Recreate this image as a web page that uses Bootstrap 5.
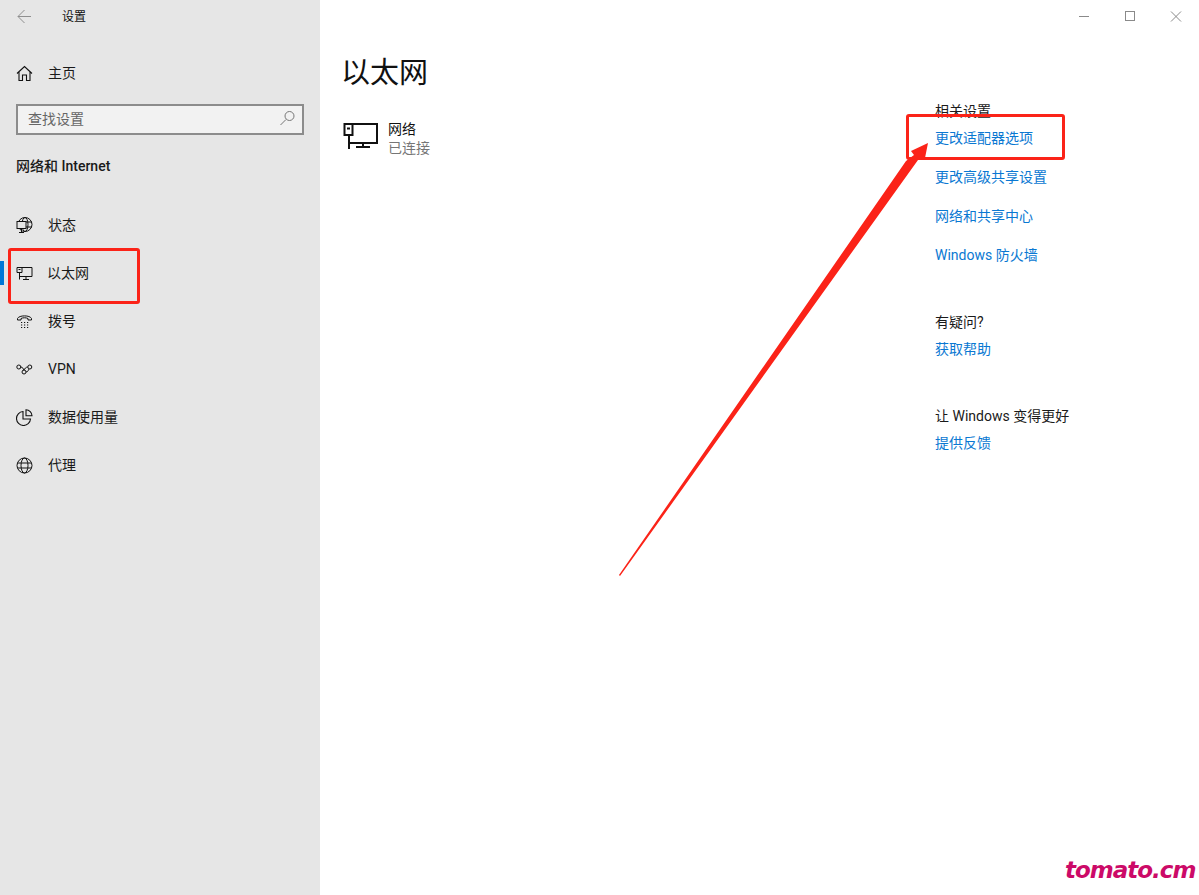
<!DOCTYPE html>
<html lang="zh-CN">
<head>
<meta charset="utf-8">
<title>设置</title>
<link href="https://cdn.jsdelivr.net/npm/bootstrap@5.3.0/dist/css/bootstrap.min.css" rel="stylesheet">
<style>
html,body{height:100%;margin:0;overflow:hidden}
body{font-family:Roboto,"Noto Sans CJK SC",sans-serif;font-size:14px;line-height:20px;color:#000;background:#fff;position:relative}
.shell{height:895px;width:1199px}
.side{width:320px;background:#e6e6e6;flex:none}
.backbar{height:32px;padding-left:17px}
.backbar span{font-size:12px;margin-left:28px;color:#111;position:relative;top:1px}
.homerow{height:32px;margin-top:25px;padding-left:16px}
.ico{width:17px;height:17px;flex:none;display:block}
.rowlabel{margin-left:15px;color:#1a1a1a}
.on .rowlabel{margin-left:14px}
.searchbox{height:31px;margin:15px 16px 0;border:2px solid #8c8c8c;background:#f2f2f2;padding:0 6px 2px 10px;color:#666}
.sechead{margin:21px 0 0 16px;height:20px;color:#1a1a1a}
.sechead b{font-size:14px;font-weight:500}
.navlist{margin-top:25px}
.navrow{height:48px;padding-left:16px;position:relative}
.navrow.on::before{content:"";position:absolute;left:0;top:12px;width:4px;height:24px;background:#0078d7}
.mainpane{min-width:0}
.winctl{height:32px;padding-right:14px;gap:29px}
.winctl svg{width:17px;height:17px;display:block}
.pagebody{padding-left:23px}
.pagetitle{font-size:29px;line-height:40px;font-weight:400;margin:21px 0 0 -2px;color:#111}
.netitem{margin-top:27px;margin-left:-1px;gap:10px}
.netname{line-height:19px;color:#111}
.netstate{line-height:19px;color:#767676}
.netglyph{display:block;margin:2px 0 0 1px}
.related{width:264px;flex:none;margin-top:69px}
.related h6{font-size:14px;font-weight:400;line-height:20px;margin:0;color:#1a1a1a}
.golink{display:block;color:#0a78d2;text-decoration:none;line-height:20px}
.grouplinks .golink{margin-top:19px}
.grouplinks h6 + .golink{margin-top:7px}
.helpgroup{margin-top:47px}
.feedgroup{margin-top:47px}
.helpgroup .golink,.feedgroup .golink{margin-top:7px}
.annot{position:absolute;border:3px solid #fb2318;border-radius:3px;pointer-events:none}
.a1{left:8px;top:248px;width:132px;height:56px}
.a2{left:906px;top:114px;width:159px;height:46px}
.arrowlayer{position:absolute;left:0;top:0;width:1199px;height:895px;pointer-events:none}
.wm{position:absolute;left:1065px;top:854px;font-family:"DejaVu Sans",sans-serif;font-weight:700;font-style:italic;font-size:23px;line-height:32px;color:#cc0a68;letter-spacing:-1px;white-space:nowrap}
</style>
</head>
<body>
<div class="shell d-flex">
  <nav class="side d-flex flex-column">
    <div class="backbar d-flex align-items-center">
      <svg class="ico" viewBox="0 0 17 17" fill="none" stroke="#8f8f8f" stroke-width="1"><path d="M1 8.500h13M7.500 2L1 8.500 7.500 15"/></svg>
      <span>设置</span>
    </div>
    <div class="homerow d-flex align-items-center">
      <svg class="ico" viewBox="0 0 17 17" fill="none" stroke="#111" stroke-width="1.100"><path d="M1 8.500L8.500 1.500 16 8.500M3 7v8.500h3.500V10h4v5.500H14V7"/></svg>
      <span class="rowlabel">主页</span>
    </div>
    <div class="searchbox d-flex align-items-center justify-content-between">
      <span>查找设置</span>
      <svg class="ico" viewBox="0 0 17 17" fill="none" stroke="#777" stroke-width="1"><circle cx="10.500" cy="6" r="4.500"/><path d="M7 9.500L1.500 15"/></svg>
    </div>
    <div class="sechead"><b>网络和 Internet</b></div>
    <div class="navlist">
      <div class="navrow d-flex align-items-center">
        <svg class="ico" viewBox="0 0 17 17" fill="none" stroke="#111" stroke-width="1"><circle cx="9" cy="7.500" r="7"/><ellipse cx="9" cy="7.500" rx="3" ry="7"/><path d="M2 5h14M2 10h14"/><rect x="1" y="4.500" width="9" height="7" fill="#e6e6e6"/><path d="M5.500 11.500v4M3 15.500h5"/></svg>
        <span class="rowlabel">状态</span>
      </div>
      <div class="navrow on d-flex align-items-center">
        <svg class="ico" viewBox="0 0 17 17" fill="none" stroke="#111" stroke-width="1"><path d="M5 2.500h11v9H3.500M3.500 7.500v7M7 14.500h6M10 11.500v3M1 2.500h5v5H1zM2.500 4.500h2"/></svg>
        <span class="rowlabel">以太网</span>
      </div>
      <div class="navrow d-flex align-items-center">
        <svg class="ico" viewBox="0 0 17 17" fill="none" stroke="#111" stroke-width="1"><path d="M1.500 7V5.500C3 2 14 2 15.500 5.500V7h-3.500V5.500C10 4.500 7 4.500 5 5.500V7z"/><path d="M5 9.500h1.200M8 9.500h1.200M11 9.500h1.200M5 12h1.200M8 12h1.200M11 12h1.200M5 14.500h1.200M8 14.500h1.200M11 14.500h1.200" stroke-width="1.200"/></svg>
        <span class="rowlabel">拨号</span>
      </div>
      <div class="navrow d-flex align-items-center">
        <svg class="ico" viewBox="0 0 17 17" fill="none" stroke="#111" stroke-width="1"><circle cx="2.800" cy="6" r="2"/><circle cx="13.800" cy="6" r="2"/><circle cx="8" cy="11" r="2"/><path d="M4.800 6c2 0 2.500 2 3 3M11.800 6c-2 0-3 1.500-4 3.500M10 11c2 0 2.500-2 3-3.200"/></svg>
        <span class="rowlabel">VPN</span>
      </div>
      <div class="navrow d-flex align-items-center">
        <svg class="ico" viewBox="0 0 17 17" fill="none" stroke="#111" stroke-width="1.100"><path d="M7 2.500a7 7 0 1 0 7.500 7.500H7zM10 .8a6 6 0 0 1 6 6h-6z"/></svg>
        <span class="rowlabel">数据使用量</span>
      </div>
      <div class="navrow d-flex align-items-center">
        <svg class="ico" viewBox="0 0 17 17" fill="none" stroke="#111" stroke-width="1"><circle cx="8.500" cy="8.500" r="7.500"/><ellipse cx="8.500" cy="8.500" rx="3.500" ry="7.500"/><path d="M1.500 6h14M1.500 11h14"/></svg>
        <span class="rowlabel">代理</span>
      </div>
    </div>
  </nav>
  <main class="mainpane flex-grow-1 d-flex flex-column">
    <div class="winctl d-flex justify-content-end align-items-center">
      <svg viewBox="0 0 17 17" fill="none" stroke="#8a8a8a"><path d="M3 8.500h10"/></svg>
      <svg viewBox="0 0 17 17" fill="none" stroke="#8a8a8a"><rect x="3.500" y="3.500" width="9" height="9"/></svg>
      <svg viewBox="0 0 17 17" fill="none" stroke="#8a8a8a"><path d="M3 3.500l10 10M13 3.500l-10 10"/></svg>
    </div>
    <div class="pagebody d-flex flex-grow-1">
      <section class="flex-grow-1">
        <h1 class="pagetitle">以太网</h1>
        <div class="netitem d-flex align-items-start">
          <svg class="netglyph" width="35" height="28" viewBox="0 0 35 28" fill="none" stroke="#111" stroke-width="2"><path d="M9.500 2H34v19H6M6 13v14M13 25h14M20 21v4M1.500 2h8v11h-8zM4 6.500h3"/></svg>
          <div>
            <div class="netname">网络</div>
            <div class="netstate">已连接</div>
          </div>
        </div>
      </section>
      <aside class="related">
        <div class="grouplinks">
          <h6>相关设置</h6>
          <a class="golink" href="#">更改适配器选项</a>
          <a class="golink" href="#">更改高级共享设置</a>
          <a class="golink" href="#">网络和共享中心</a>
          <a class="golink" href="#">Windows 防火墙</a>
        </div>
        <div class="helpgroup">
          <h6>有疑问?</h6>
          <a class="golink" href="#">获取帮助</a>
        </div>
        <div class="feedgroup">
          <h6>让 Windows 变得更好</h6>
          <a class="golink" href="#">提供反馈</a>
        </div>
      </aside>
    </div>
  </main>
</div>
<div class="annot a1"></div>
<div class="annot a2"></div>
<svg class="arrowlayer" viewBox="0 0 1199 895"><polygon points="619,575 620,576 918,160 925,158 928,143 911,151 914,155 906,161" fill="#fb2318"/></svg>
<div class="wm">tomato.cm</div>
<script src="https://cdn.jsdelivr.net/npm/bootstrap@5.3.0/dist/js/bootstrap.bundle.min.js"></script>
</body>
</html>
